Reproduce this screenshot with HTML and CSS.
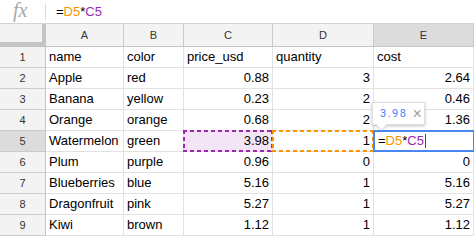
FILE: index.html
```html
<!DOCTYPE html>
<html>
<head>
<meta charset="utf-8">
<link rel="stylesheet" href="styles.css">
</head>
<body>
<div class="fbar">
  <span class="fx">fx</span>
  <span class="sep"></span>
  <span class="formula">=<span class="ref-d">D5</span>*<span class="ref-c">C5</span></span>
</div>
<div class="sheet">
  <div class="grid">
    <div class="corner"></div>
    <div class="ch">A</div><div class="ch">B</div><div class="ch">C</div><div class="ch">D</div><div class="ch sel">E</div>

    <div class="rh">1</div><div class="c">name</div><div class="c">color</div><div class="c">price_usd</div><div class="c">quantity</div><div class="c">cost</div>
    <div class="rh">2</div><div class="c">Apple</div><div class="c">red</div><div class="c n">0.88</div><div class="c n">3</div><div class="c n">2.64</div>
    <div class="rh">3</div><div class="c">Banana</div><div class="c">yellow</div><div class="c n">0.23</div><div class="c n">2</div><div class="c n">0.46</div>
    <div class="rh">4</div><div class="c">Orange</div><div class="c">orange</div><div class="c n">0.68</div><div class="c n">2</div><div class="c n">1.36</div>
    <div class="rh sel">5</div><div class="c">Watermelon</div><div class="c">green</div><div class="c n hl-c">3.98</div><div class="c n hl-d">1</div>
    <div class="c active"><div class="editor">=<span class="ref-d">D5</span>*<span class="ref-c">C5</span><span class="caret"></span></div></div>
    <div class="rh">6</div><div class="c">Plum</div><div class="c">purple</div><div class="c n">0.96</div><div class="c n">0</div><div class="c n">0</div>
    <div class="rh">7</div><div class="c">Blueberries</div><div class="c">blue</div><div class="c n">5.16</div><div class="c n">1</div><div class="c n">5.16</div>
    <div class="rh">8</div><div class="c">Dragonfruit</div><div class="c">pink</div><div class="c n">5.27</div><div class="c n">1</div><div class="c n">5.27</div>
    <div class="rh">9</div><div class="c">Kiwi</div><div class="c">brown</div><div class="c n">1.12</div><div class="c n">1</div><div class="c n">1.12</div>
  </div>
  <div class="tip"><span class="tip-val">3.98</span><span class="tip-x">×</span></div>
</div>
</body>
</html>
```
FILE: styles.css
```css
html, body {
  margin: 0;
  padding: 0;
  background: #fff;
  overflow: hidden;
}
body {
  width: 474px;
  height: 237px;
  font-family: "Liberation Sans", Arial, sans-serif;
  color: #000;
}
.fbar {
  height: 23px;
  border-bottom: 1px solid #d4d4d4;
  display: flex;
  align-items: center;
  box-sizing: content-box;
}
.fx {
  width: 45px;
  padding-left: 13px;
  box-sizing: border-box;
  font-family: "Liberation Serif", "Times New Roman", serif;
  font-style: italic;
  font-size: 20px;
  color: #a8a8a8;
  line-height: 23px;
  margin-top: -2px;
}
.sep {
  width: 1px;
  height: 16px;
  background: #dadada;
}
.formula {
  margin-left: 10px;
  font-size: 13px;
  line-height: 23px;
}
.ref-d { color: #f79400; }
.ref-c { color: #9c27b0; }

.sheet {
  position: relative;
}
.grid {
  display: grid;
  grid-template-columns: 46px 78px 60px 89px 101px 100px;
  grid-template-rows: 23px repeat(9, 21px);
}
.grid > div {
  box-sizing: border-box;
}
.corner {
  background: #f3f3f3;
  border-right: 4px solid #c4c4c4;
  border-bottom: 5px solid #c4c4c4;
}
.ch {
  background: #f3f3f3;
  border-right: 1px solid #cacaca;
  border-bottom: 1px solid #c4c4c4;
  font-size: 11px;
  color: #333;
  text-align: center;
  line-height: 22px;
}
.rh {
  background: #f3f3f3;
  border-right: 1px solid #c4c4c4;
  border-bottom: 1px solid #cacaca;
  font-size: 11px;
  color: #333;
  text-align: center;
  line-height: 20px;
}
.sel { background: #dcdcdc; }
.c {
  border-right: 1px solid #e2e2e2;
  border-bottom: 1px solid #e2e2e2;
  font-size: 13px;
  line-height: 20px;
  padding: 0 3px;
  white-space: nowrap;
  overflow: hidden;
}
.n { text-align: right; }

.hl-c, .hl-d {
  position: relative;
  overflow: visible;
}
.hl-c::after, .hl-d::after {
  content: "";
  position: absolute;
  top: -1px;
  left: -1px;
  right: -1px;
  bottom: -1px;
}
.hl-c { background: #f3e5f5; }
.hl-c::after {
  background:
    repeating-linear-gradient(90deg, #9c27b0 0 4px, transparent 4px 7px) left top / 100% 2px no-repeat,
    repeating-linear-gradient(90deg, #9c27b0 0 4px, transparent 4px 7px) left bottom / 100% 2px no-repeat,
    repeating-linear-gradient(180deg, #9c27b0 0 4px, transparent 4px 7px) left top / 2px 100% no-repeat,
    repeating-linear-gradient(180deg, #9c27b0 0 4px, transparent 4px 7px) right top / 2px 100% no-repeat;
}
.hl-d::after {
  background:
    repeating-linear-gradient(90deg, #f79400 0 4px, transparent 4px 7px) left top / 100% 2px no-repeat,
    repeating-linear-gradient(90deg, #f79400 0 4px, transparent 4px 7px) left bottom / 100% 2px no-repeat,
    repeating-linear-gradient(180deg, #f79400 0 4px, transparent 4px 7px) left top / 2px 100% no-repeat,
    repeating-linear-gradient(180deg, #f79400 0 4px, transparent 4px 7px) right top / 2px 100% no-repeat;
}

.active {
  position: relative;
  overflow: visible;
  padding: 0;
}
.editor {
  position: absolute;
  top: -1px;
  left: -1px;
  right: -2px;
  bottom: -1px;
  border: 2px solid #4a86f0;
  background: #fff;
  padding-left: 3px;
  font-size: 13px;
  line-height: 18px;
  display: flex;
  align-items: center;
}
.caret {
  display: inline-block;
  width: 1px;
  height: 14px;
  background: #6a2a86;
  margin-left: 1px;
}

.tip {
  position: absolute;
  left: 372px;
  top: 78px;
  width: 53px;
  height: 23px;
  box-sizing: border-box;
  background: #fff;
  border: 1px solid #e0e0e0;
  box-shadow: 0 1px 3px rgba(0,0,0,0.25);
  display: flex;
  align-items: center;
  padding-left: 7px;
  gap: 5px;
}
.tip::after {
  content: "";
  position: absolute;
  left: 4px;
  bottom: -6px;
  width: 8px;
  height: 8px;
  background: #fff;
  border-right: 1px solid #e0e0e0;
  border-bottom: 1px solid #e0e0e0;
  transform: rotate(45deg) scale(0.8, 0.8);
  box-shadow: 1px 1px 1px rgba(0,0,0,0.12);
}
.tip-val {
  font-family: Roboto, "Liberation Sans", sans-serif;
  font-size: 11px;
  letter-spacing: 1.5px;
  color: #4285f4;
}
.tip-x {
  font-family: "Liberation Sans", Arial, sans-serif;
  font-size: 16px;
  color: #a0a0a0;
  line-height: 16px;
}
```
